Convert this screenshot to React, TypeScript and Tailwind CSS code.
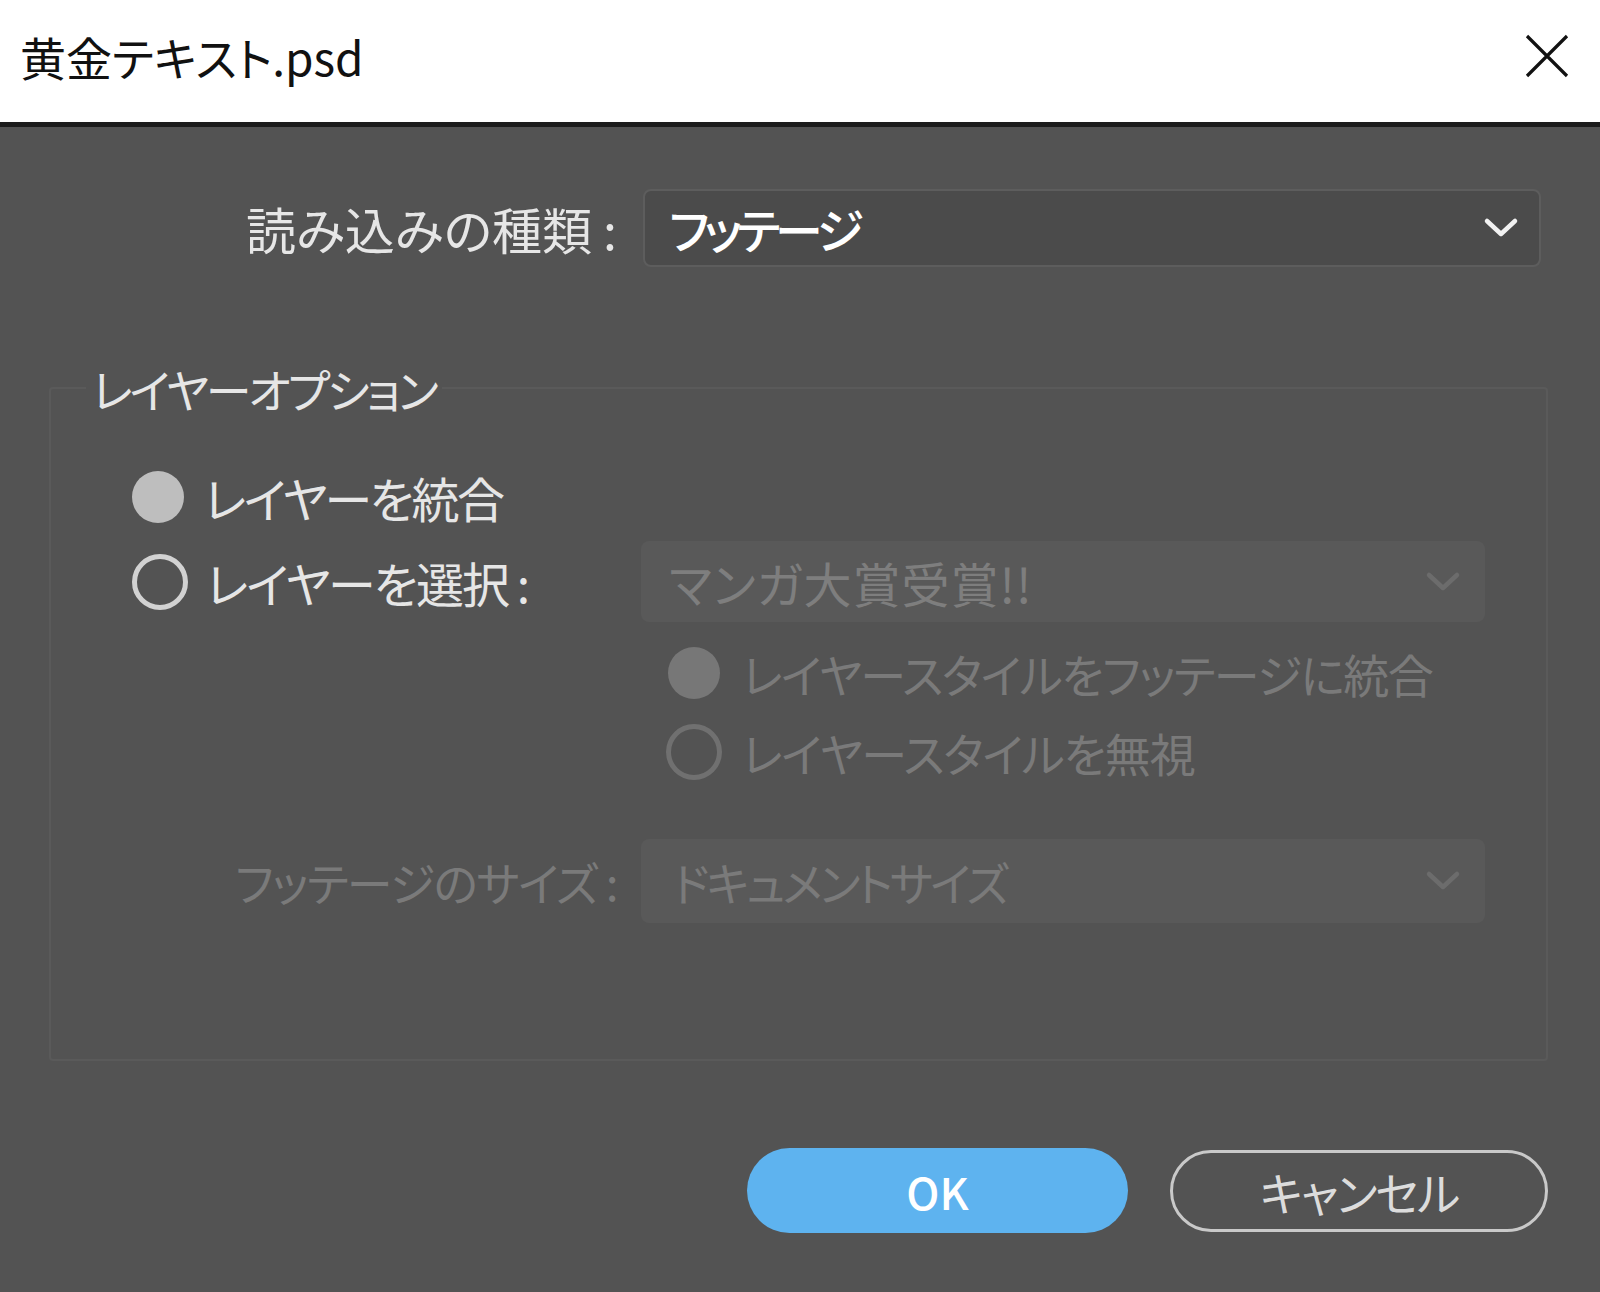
import React from "react";

const font = "font-['Noto_Sans_CJK_JP','Noto_Sans',sans-serif] [font-feature-settings:'palt']";

function Chevron({ color }: { color: string }) {
  return (
    <svg width="36" height="22" viewBox="0 0 36 22" fill="none">
      <path d="M4 4 L18 17 L32 4" stroke={color} strokeWidth="4.5" strokeLinecap="round" strokeLinejoin="round" />
    </svg>
  );
}

function Radio({ checked, disabled }: { checked: boolean; disabled?: boolean }) {
  if (checked) {
    return (
      <div className={`h-[52px] w-[52px] shrink-0 rounded-full ${disabled ? "bg-[#777777]" : "bg-[#bebebe]"}`} />
    );
  }
  return (
    <div
      className={`h-[56px] w-[56px] shrink-0 rounded-full border-[5px] ${disabled ? "border-[#707070]" : "border-[#d2d2d2]"}`}
    />
  );
}

export default function App() {
  return (
    <div className={`w-[1600px] h-[1292px] bg-[#535353] flex flex-col ${font}`}>
      {/* Title bar */}
      <div className="h-[122px] bg-white flex items-center justify-between pl-[20px] pr-[31px] pb-[10px]">
        <span className="text-[46px] leading-none text-[#111111]">黄金テキスト.psd</span>
        <svg width="44" height="44" viewBox="0 0 44 44">
          <path d="M2 2 L42 42 M42 2 L2 42" stroke="#111" strokeWidth="3.2" />
        </svg>
      </div>
      <div className="h-[5px] bg-[#1c1c1c]" />

      {/* Import type row */}
      <div className="mt-[62px] flex items-center">
        <div className="w-[617px] text-right text-[50px] leading-none text-[#e6e6e6]">読み込みの種類 :</div>
        <div className="ml-[26px] w-[898px] h-[78px] rounded-[8px] bg-[#4b4b4b] border-2 border-[#5d5d5d] flex items-center justify-between pl-[24px] pr-[20px]">
          <span className="text-[48px] leading-none text-white font-medium tracking-[-5px]">フッテージ</span>
          <Chevron color="#f2f2f2" />
        </div>
      </div>

      {/* Layer options group */}
      <fieldset className="mt-[93px] ml-[49px] w-[1499px] border-2 border-[#5a5a5a] rounded-[4px] p-0 pb-[136px]">
        <legend className="ml-[35px] px-[6px] text-[46px] leading-[56px] text-[#e6e6e6] tracking-[-3px]">レイヤーオプション</legend>

        <div className="pl-[81px] flex flex-col">
          <div className="mt-[51px] h-[60px] flex items-center">
            <Radio checked />
            <span className="ml-[20px] text-[48px] leading-none text-[#e6e6e6] tracking-[-2.5px]">レイヤーを統合</span>
          </div>

          <div className="mt-[14px] h-[81px] flex items-center">
            <div className="w-[509px] flex items-center">
              <Radio checked={false} />
              <span className="ml-[18px] text-[48px] leading-none text-[#e6e6e6] tracking-[-2px]">レイヤーを選択 :</span>
            </div>
            <div className="w-[844px] h-[81px] rounded-[8px] bg-[#595959] flex items-center justify-between pl-[28px] pr-[24px]">
              <span className="text-[48px] leading-none text-[#7e7e7e] tracking-[1px]">マンガ大賞受賞!!</span>
              <Chevron color="#6c6c6c" />
            </div>
          </div>

          <div className="ml-[536px] mt-[21px] h-[60px] flex items-center">
            <Radio checked disabled />
            <span className="ml-[22px] text-[46px] leading-none text-[#7a7a7a] tracking-[-1.5px]">レイヤースタイルをフッテージに統合</span>
          </div>
          <div className="ml-[534px] mt-[19px] h-[60px] flex items-center">
            <Radio checked={false} disabled />
            <span className="ml-[20px] text-[46px] leading-none text-[#7a7a7a] tracking-[-1.2px]">レイヤースタイルを無視</span>
          </div>

          <div className="mt-[57px] -ml-[81px] flex items-center">
            <div className="w-[566px] text-right text-[46px] leading-none text-[#7a7a7a] tracking-[-1.5px]">フッテージのサイズ :</div>
            <div className="ml-[24px] w-[844px] h-[84px] rounded-[8px] bg-[#595959] flex items-center justify-between pl-[32px] pr-[24px]">
              <span className="text-[46px] leading-none text-[#7a7a7a] tracking-[-3px]">ドキュメントサイズ</span>
              <Chevron color="#6c6c6c" />
            </div>
          </div>
        </div>
      </fieldset>

      {/* Buttons */}
      <div className="mt-[87px] flex justify-end items-center pr-[52px] gap-[42px]">
        <div className="w-[381px] h-[85px] rounded-full bg-[#5eb3ef] flex items-center justify-center">
          <span className="text-[44px] leading-none text-white font-medium">OK</span>
        </div>
        <div className="w-[378px] h-[82px] rounded-full border-[3px] border-[#c9c9c9] flex items-center justify-center">
          <span className="text-[46px] leading-none text-[#dcdcdc] tracking-[-2px]">キャンセル</span>
        </div>
      </div>
    </div>
  );
}
